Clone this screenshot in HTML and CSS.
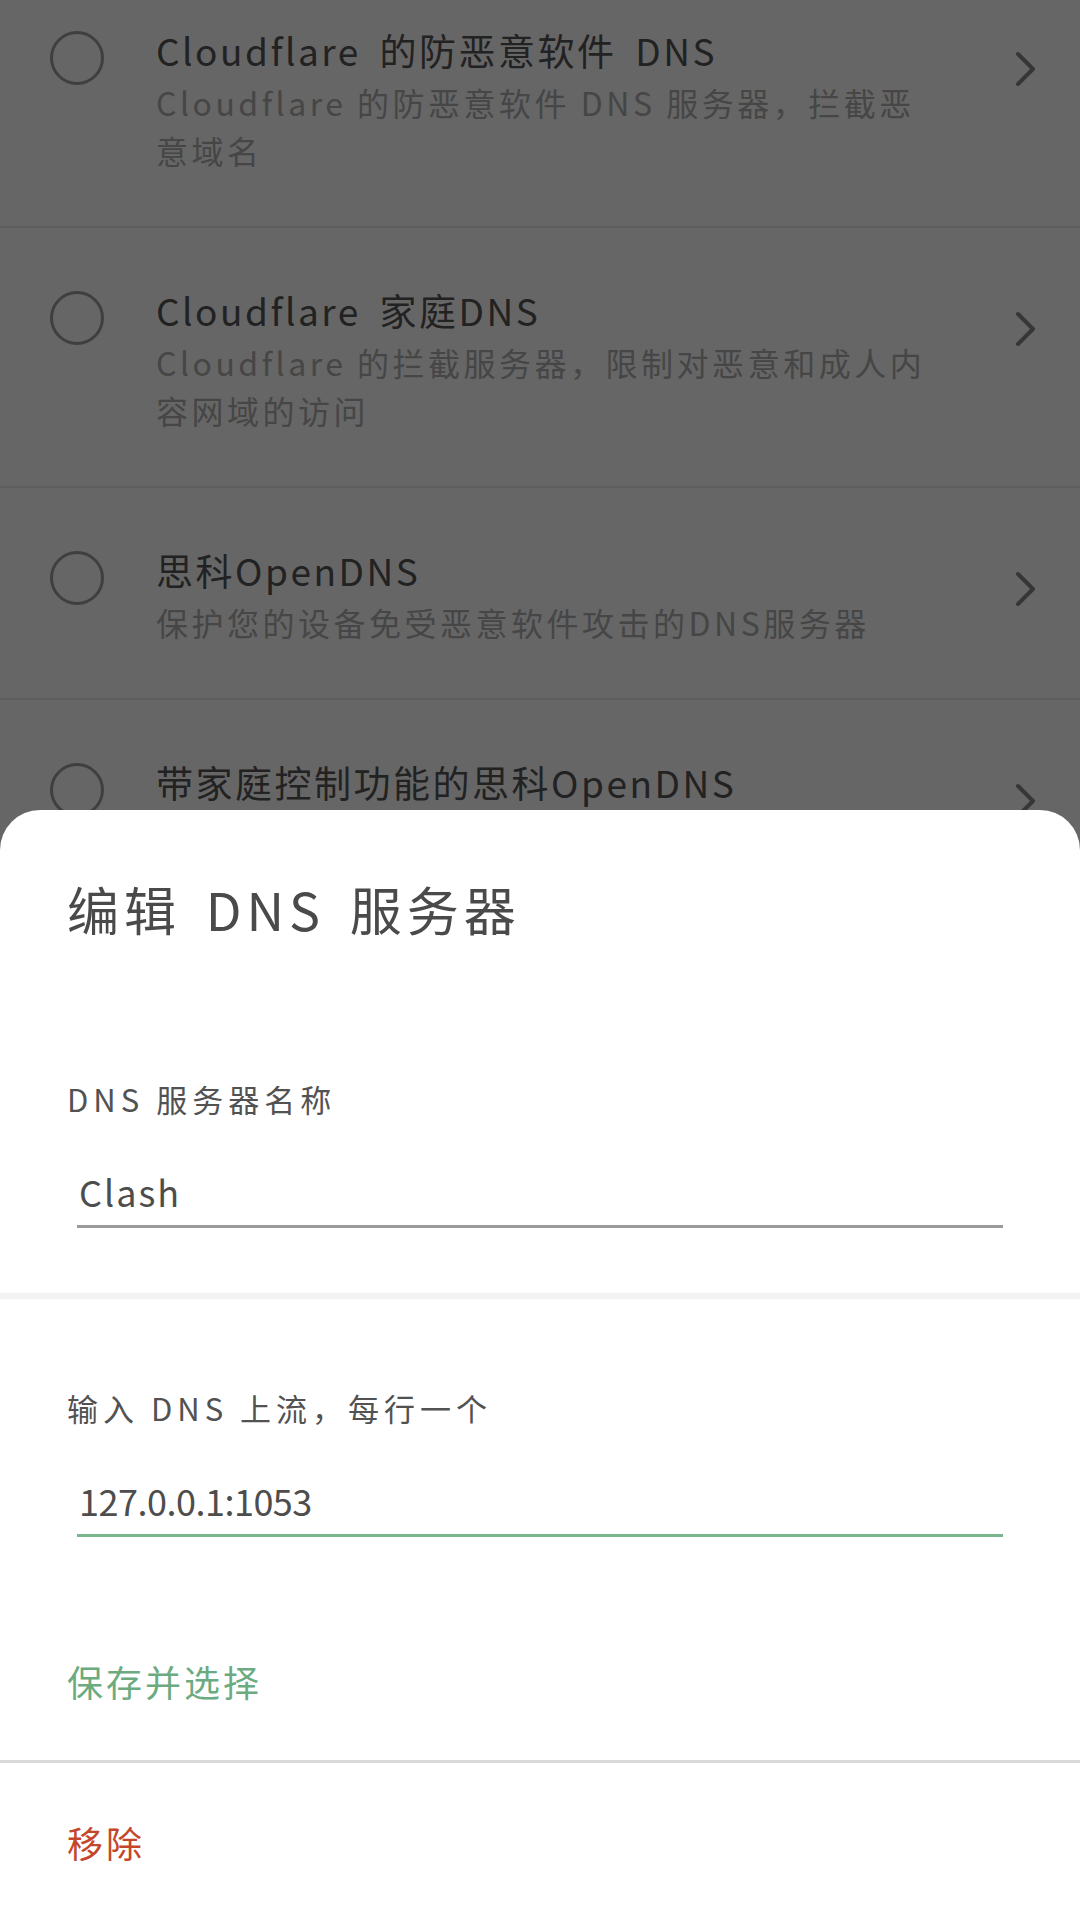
FILE: index.html
```html
<!DOCTYPE html>
<html lang="zh-CN">
<head>
<meta charset="utf-8">
<title>编辑 DNS 服务器</title>
<link rel="stylesheet" href="styles.css">
</head>
<body>
<div class="screen">
  <ul class="dns-list">
    <li class="dns-item">
      <span class="radio"></span>
      <div class="dns-text">
        <div class="dns-name">Cloudflare 的防恶意软件 DNS</div>
        <div class="dns-desc">Cloudflare 的防恶意软件 DNS 服务器，拦截恶意域名</div>
      </div>
      <svg class="chev" viewBox="0 0 21 36" width="21" height="36"><path d="M3 3 L18 18 L3 33" fill="none" stroke="currentColor" stroke-width="4" stroke-linecap="round" stroke-linejoin="round"/></svg>
    </li>
    <li class="dns-item">
      <span class="radio"></span>
      <div class="dns-text">
        <div class="dns-name">Cloudflare 家庭DNS</div>
        <div class="dns-desc">Cloudflare 的拦截服务器，限制对恶意和成人内容网域的访问</div>
      </div>
      <svg class="chev" viewBox="0 0 21 36" width="21" height="36"><path d="M3 3 L18 18 L3 33" fill="none" stroke="currentColor" stroke-width="4" stroke-linecap="round" stroke-linejoin="round"/></svg>
    </li>
    <li class="dns-item">
      <span class="radio"></span>
      <div class="dns-text">
        <div class="dns-name">思科OpenDNS</div>
        <div class="dns-desc">保护您的设备免受恶意软件攻击的DNS服务器</div>
      </div>
      <svg class="chev" viewBox="0 0 21 36" width="21" height="36"><path d="M3 3 L18 18 L3 33" fill="none" stroke="currentColor" stroke-width="4" stroke-linecap="round" stroke-linejoin="round"/></svg>
    </li>
    <li class="dns-item">
      <span class="radio"></span>
      <div class="dns-text">
        <div class="dns-name">带家庭控制功能的思科OpenDNS</div>
        <div class="dns-desc">阻止成人内容并保护您免受恶意软件侵害</div>
      </div>
      <svg class="chev" viewBox="0 0 21 36" width="21" height="36"><path d="M3 3 L18 18 L3 33" fill="none" stroke="currentColor" stroke-width="4" stroke-linecap="round" stroke-linejoin="round"/></svg>
    </li>
  </ul>

  <div class="scrim"></div>

  <div class="sheet">
    <h1 class="sheet-title">编辑 DNS 服务器</h1>
    <div class="field field-first">
      <div class="field-label">DNS 服务器名称</div>
      <input class="field-input field-input-name" type="text" value="Clash">
    </div>
    <div class="field">
      <div class="field-label">输入 DNS 上流，每行一个</div>
      <input class="field-input field-input-active" type="text" value="127.0.0.1:1053">
    </div>
    <div class="action action-save">保存并选择</div>
    <div class="action action-remove">移除</div>
  </div>
</div>
</body>
</html>
```

FILE: styles.css
```css
* { box-sizing: border-box; }

html, body {
  margin: 0;
  padding: 0;
}

body {
  width: 1080px;
  height: 1920px;
  overflow: hidden;
  background: #ffffff;
  font-family: "Noto Sans CJK SC", "Noto Sans", sans-serif;
  font-weight: 400;
}

.screen {
  position: relative;
  width: 1080px;
  height: 1920px;
  overflow: hidden;
}

/* ---------- background list ---------- */
.dns-list {
  list-style: none;
  margin: -32px 0 0 0;
  padding: 0;
}

.dns-item {
  display: flex;
  align-items: flex-start;
  padding: 58px 44px 52px 50px;
  border-bottom: 2px solid #e9e9e9;
}

.radio {
  flex: none;
  width: 54px;
  height: 54px;
  margin-top: 5px;
  border: 3px solid #9e9e9e;
  border-radius: 50%;
}

.dns-text {
  flex: none;
  width: 784px;
  margin-left: 52px;
}

.dns-name {
  font-size: 37px;
  line-height: 48px;
  letter-spacing: 2.5px;
  word-spacing: 8px;
  color: #555555;
  white-space: nowrap;
}

.dns-desc {
  margin-top: 4px;
  font-size: 32px;
  line-height: 48px;
  letter-spacing: 3.5px;
  color: #aeaeae;
}

.chev {
  flex: none;
  margin-left: auto;
  margin-top: 25px;
  color: #878787;
}

.scrim {
  position: absolute;
  inset: 0;
  background: rgba(0, 0, 0, 0.6);
}

/* ---------- bottom sheet ---------- */
.sheet {
  position: absolute;
  left: 0;
  right: 0;
  top: 810px;
  bottom: 0;
  background: #ffffff;
  border-radius: 40px 40px 0 0;
  padding-top: 64px;
}

.sheet-title {
  margin: 0 0 46px 0;
  padding: 0 67px;
  font-size: 52px;
  font-weight: 400;
  line-height: 70px;
  letter-spacing: 5px;
  word-spacing: 8px;
  color: #4a4a4a;
}

.field {
  padding: 87px 67px 65px 67px;
}

.field-first {
  border-bottom: 6px solid #f2f2f2;
}

.field-label {
  font-size: 31px;
  line-height: 44px;
  letter-spacing: 5px;
  color: #525252;
}

.field-input {
  display: block;
  width: 926px;
  height: 61px;
  margin: 46px 0 0 10px;
  padding: 0 0 10px 2px;
  border: none;
  border-bottom: 3px solid #9a9a9a;
  border-radius: 0;
  outline: none;
  background: transparent;
  font-family: "Noto Sans CJK SC", "Noto Sans", sans-serif;
  font-size: 36px;
  line-height: 48px;
  letter-spacing: -0.5px;
  color: #4d4d4d;
}

.field-input-name {
  letter-spacing: 2px;
}

.field-input-active {
  border-bottom-color: #7ab68d;
}

.action {
  padding: 55px 67px;
  font-size: 36px;
  line-height: 48px;
  letter-spacing: 3px;
}

.action-save {
  color: #6bab7f;
}

.action-remove {
  border-top: 3px solid #d9d9d9;
  color: #c4462b;
}
```
